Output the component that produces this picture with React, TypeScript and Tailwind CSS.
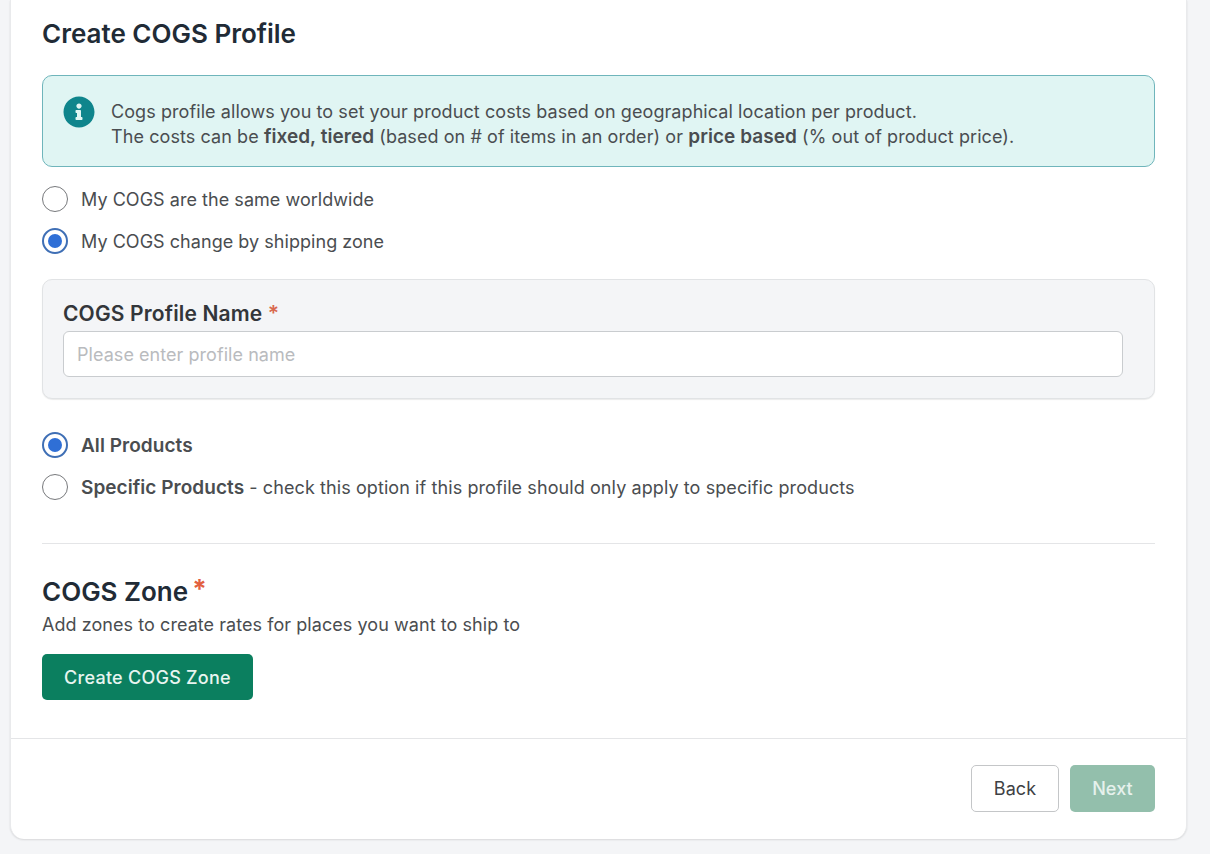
import { FaInfoCircle } from "react-icons/fa"
import type { ReactNode } from "react"

function Radio({ checked, children }: { checked?: boolean; children: ReactNode }) {
  return (
    <label className="flex items-center gap-[13px] h-[26px] text-[18px] tracking-[0.04px] text-[#4a4d50]">
      {checked ? (
        <span className="flex items-center justify-center w-[26px] h-[26px] rounded-full border-2 border-[#3f6fb5] bg-white">
          <span className="w-[14px] h-[14px] rounded-full bg-[#2f6fd6]" />
        </span>
      ) : (
        <span className="w-[26px] h-[26px] rounded-full border border-[#77797c] bg-white" />
      )}
      <span>{children}</span>
    </label>
  )
}

function Strong({ children }: { children: ReactNode }) {
  return <b className="font-semibold text-[19px] leading-none tracking-[0.05px]">{children}</b>
}

export default function App() {
  return (
    <div className="h-[854px] overflow-hidden bg-[#f4f5f7] pl-[10px] pr-[23px] font-['Inter',sans-serif]">
      <div className="h-[839px] flex flex-col bg-white rounded-b-[14px] border-x border-[#e9eaec] shadow-[0_1px_2px_rgba(0,0,0,0.12)]">
        <div className="flex-1 px-[31px]">
          <h1 className="mt-[16px] h-[36px] leading-[36px] text-[26px] font-semibold text-[#212b36]">Create COGS Profile</h1>

          <div className="mt-[23px] h-[92px] flex gap-[16px] pl-[20px] pt-[20px] rounded-[10px] border border-[#6fb5bb] bg-[#e0f5f3]">
            <FaInfoCircle className="w-[32px] h-[32px] text-[#0f858c] shrink-0" />
            <p className="text-[18px] leading-[25px] tracking-[0.08px] text-[#4a4d50] mt-[3px]">
              Cogs profile allows you to set your product costs based on geographical location per product.
              <br />
              The costs can be <Strong>fixed, tiered</Strong> (based on # of items in an order) or{" "}
              <Strong>price based</Strong> (% out of product price).
            </p>
          </div>

          <div className="mt-[19px] flex flex-col gap-[16px]">
            <Radio>My COGS are the same worldwide</Radio>
            <Radio checked>My COGS change by shipping zone</Radio>
          </div>

          <div className="mt-[25px] h-[120px] px-[20px] pt-[20px] rounded-[10px] border border-[#e1e3e5] bg-[#f4f5f7] shadow-[0_1px_1px_rgba(0,0,0,0.08)]">
            <div className="h-[32px] leading-[30px] -mt-[1px] text-[21px] tracking-[0.15px] font-semibold text-[#33363a]">
              COGS Profile Name <span className="text-[#d9694f]">*</span>
            </div>
            <input
              placeholder="Please enter profile name"
              className="block w-[1060px] h-[46px] px-[13px] rounded-[6px] border border-[#c9cccf] bg-white text-[18px] tracking-[0.05px] placeholder:text-[#b9bbbe]"
            />
          </div>

          <div className="mt-[33px] flex flex-col gap-[16px]">
            <Radio checked><Strong>All Products</Strong></Radio>
            <Radio>
              <Strong>Specific Products</Strong>
              <span className="tracking-[0.09px]"> - check this option if this profile should only apply to specific products</span>
            </Radio>
          </div>

          <div className="mt-[43px] border-t border-[#e4e5e7]" />

          <h2 className="mt-[30px] h-[36px] leading-[36px] text-[26px] font-semibold text-[#212b36]">
            COGS Zone<span className="ml-[4px] align-[3px] leading-none font-bold text-[#e2603f]">*</span>
          </h2>
          <p className="mt-[2px] h-[26px] leading-[26px] text-[18px] tracking-[0.06px] text-[#4a4d50]">
            Add zones to create rates for places you want to ship to
          </p>
          <button className="mt-[16px] h-[46px] w-[211px] rounded-[5px] bg-[#0b7f5f] text-[18px] font-medium tracking-[0.25px] text-[#e8f5f0]">
            Create COGS Zone
          </button>
        </div>

        <div className="h-[101px] flex justify-end items-start gap-[11px] pt-[26px] pr-[31px] border-t border-[#e4e5e7]">
          <button className="w-[88px] h-[47px] rounded-[5px] border border-[#c4c6c8] bg-white text-[18px] tracking-[0.1px] text-[#3e4144]">
            Back
          </button>
          <button className="w-[85px] h-[47px] rounded-[5px] bg-[#93bfac] text-[18px] font-medium tracking-[0.1px] text-[#e6f1ec]">
            Next
          </button>
        </div>
      </div>
    </div>
  )
}
